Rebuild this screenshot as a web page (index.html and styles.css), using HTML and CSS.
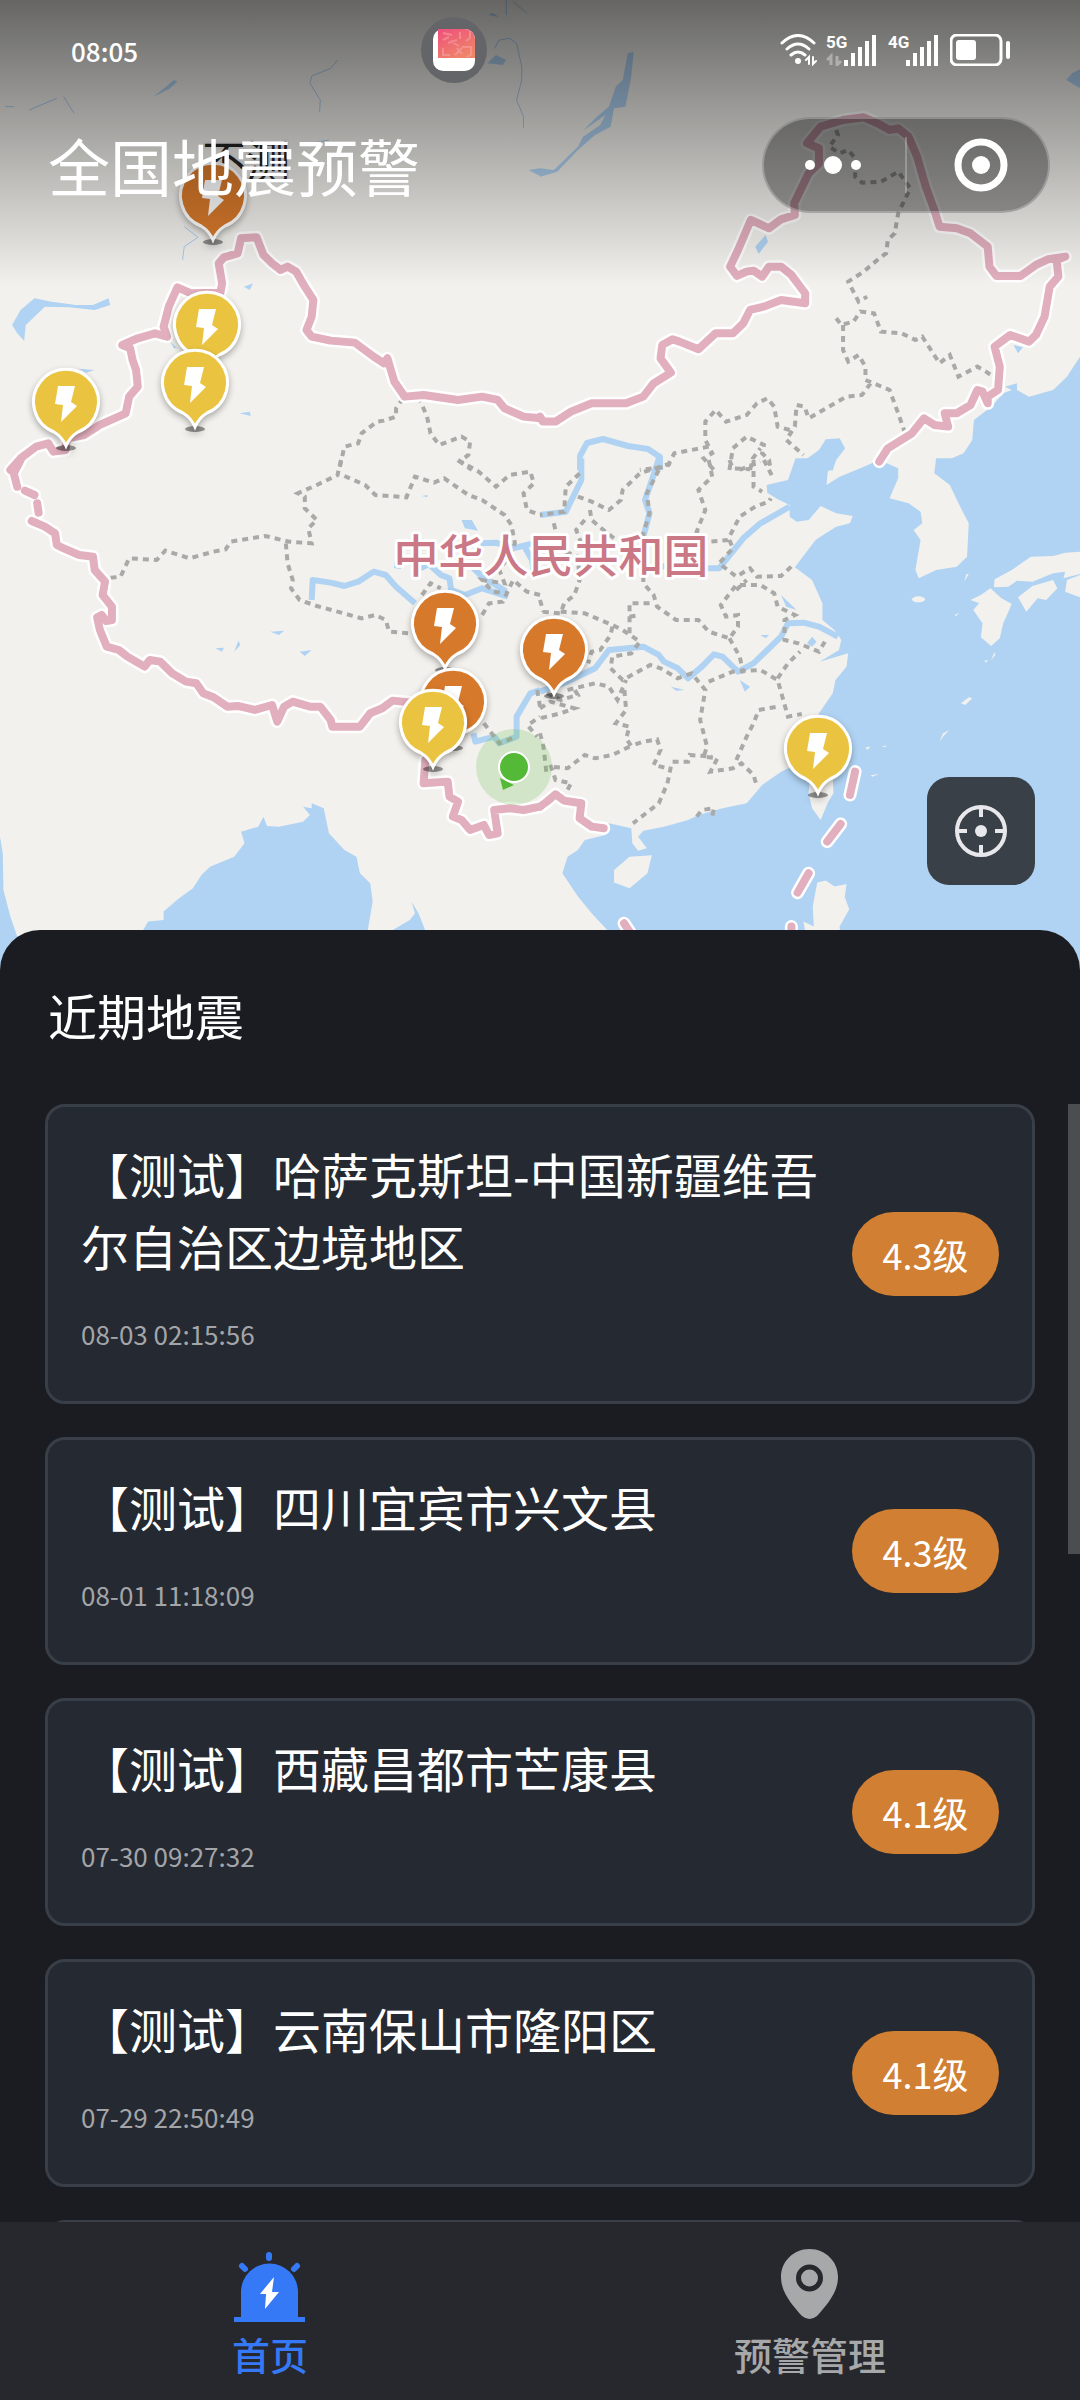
FILE: index.html
```html
<!DOCTYPE html>
<html lang="zh-CN">
<head>
    <meta charset="UTF-8">
    <meta name="viewport" content="width=device-width, initial-scale=1.0">
    <title>全国地震预警</title>
    <link rel="stylesheet" href="styles.css">
</head>
<body>
<div class="app">

    <!-- Map section -->
    <section class="map-area">
        <svg class="map" viewBox="0 0 1080 970" role="img" aria-label="地震分布地图">
            <defs>
                <!-- national border, drawn once per tile -->
                <g id="border">
                    <g transform="scale(.3444 .3333)">
                        <path d="M30 1410 60 1375 105 1340 140 1330 155 1355 190 1350 195 1315 245 1305 290 1275 365 1240 375 1190 400 1160 395 1110 385 1080 378 1045 355 1035 400 1015 450 1000 485 1010 475 980 490 920 515 862 555 880 640 878 645 850 635 790 650 772 690 760 700 715 745 712 765 765 790 790 815 810 835 800 860 815 885 860 910 900 905 950 890 990 905 1010 960 1022 1030 1028 1085 1070 1115 1090 1125 1075 1145 1145 1175 1190 1230 1185 1330 1200 1400 1190 1445 1200 1465 1225 1520 1250 1570 1255"/>
                    </g>
                    <g transform="translate(540 0) scale(.3444 .3333)">
                        <path d="M0 1250 8 1265 45 1265 90 1235 150 1210 250 1210 300 1190 330 1150 380 1118 350 1075 355 1035 385 1018 405 1025 460 1048 510 1000 560 1000 590 970 610 930 650 920 700 900 770 910 770 880 730 825 700 800 665 800 645 830 620 812 600 815 572 828 552 800 575 750 612 660 665 685 700 658 740 645 738 610 780 520 810 490 810 445 775 430 815 380 880 360 940 352 980 370 1015 390 1040 385 1070 410 1095 470 1120 560 1145 630 1160 680 1210 685 1250 700 1300 740 1305 800 1325 828 1395 828 1440 795 1475 778 1525 770 1500 780 1505 830 1480 860 1465 950 1440 1005 1420 1025 1365 1005 1320 1040 1335 1100 1330 1170 1300 1190 1300 1210 1285 1175 1270 1170 1250 1215 1210 1240 1175 1240 1185 1280 1145 1275 1115 1255 1080 1300 1010 1345 985 1385"/>
                    </g>
                    <g transform="translate(0 460) scale(.3444 .3333)">
                        <path d="M60 0 40 40 50 80M72 92 100 105M108 130 112 158M92 183 130 200 160 220 165 255 185 265 230 285 270 290 275 330 305 365 298 405 325 440 325 480 308 483 295 465 282 472 290 510 310 560 345 570 370 590 420 620 435 600 465 605 500 640 540 665 570 670 590 700 620 712 660 740 690 738 740 750 790 735 805 785 825 740 850 725 900 740 930 740 960 780 965 800 1045 800 1075 760 1110 745 1140 722 1200 728M1235 900 1230 970 1300 965 1305 1010 1330 1025 1315 1070 1340 1080 1365 1110 1405 1095 1420 1125 1445 1120 1435 1050 1480 1045 1520 1050 1568 1040"/>
                    </g>
                    <g transform="translate(540 460) scale(.3444 .3333)">
                        <path d="M0 1040 20 1025 45 1003 70 1022 120 1030 115 1075 150 1100 185 1105M915 935 900 1005M873 1092 834 1145M780 1240 748 1298M730 1400V1450M244 1390 285 1455"/>
                    </g>
                </g>
                <symbol id="pin" viewBox="-40 -40 80 96" overflow="visible">
                    <ellipse cx="0" cy="46" rx="10" ry="3" fill="#000" opacity=".4"/>
                    <path class="pin-body" d="M0 44C-3 37-7 33-12 30A32.500 32.500 0 1 1 12 30C7 33 3 37 0 44Z"/>
                    <path fill="#fff" d="M-8-16H9L5 0 11 4-5 20-3 3-11 2Z"/>
                </symbol>
            </defs>

            <rect width="1080" height="970" fill="#f2f1ed"/>

            <!-- sea and lakes -->
            <g fill="#b0d3f3">
                <g transform="scale(.3444 .3333)">
                    <path d="M35 975 60 930 100 895 150 905 220 915 270 915 315 895 320 915 275 930 200 922 130 920 100 950 75 975 70 1022 50 1000ZM445 290 480 262 505 240 515 245 490 268ZM708 860 735 850 725 870ZM495 1025 515 1045 505 1045ZM695 1240 725 1235 728 1248ZM228 1106 275 1110 250 1118ZM1535 510 1568 505V528ZM1418 45 1430 38 1450 52ZM1440 165 1470 180 1460 195 1415 190Z"/>
                </g>
                <g transform="translate(540 0) scale(.3444 .3333)">
                    <path d="M255 160 272 156 265 230 248 320 215 325 205 380 160 405 110 450 50 515 0 530V505L40 510 110 440 125 410 175 375 190 345 125 392 165 350 200 320 220 260 240 240ZM1528 240 1545 220 1568 208V265ZM625 740 655 705 662 725 635 762ZM1375 1035 1402 1042 1388 1060ZM1568 1070 1530 1130 1490 1170 1420 1190 1385 1170 1385 1150 1350 1160 1370 1170 1345 1180 1310 1220 1260 1260 1255 1320 1230 1360 1150 1395V1412H1568ZM742 1412 770 1380 810 1350 830 1318 870 1315 886 1345 860 1380 850 1412ZM930 1412 985 1388 1040 1412Z"/>
                </g>
                <g transform="translate(0 460) scale(.3444 .3333)">
                    <path d="M415 1412 430 1385 475 1380 475 1355 520 1315 560 1285 585 1245 610 1220 680 1190 710 1150 700 1115 750 1100 765 1070 775 1098 810 1100 880 1085 900 1065 880 1040 905 1045 905 1030 940 1045 955 1120 1000 1170 1035 1190 1045 1240 1075 1270 1082 1325 1068 1410 1060 1530H400ZM1138 1412 1190 1380 1205 1360 1195 1325 1215 1360 1235 1412ZM0 1130 8 1180 10 1290 30 1370 50 1430 80 1530H0ZM1340 180 1370 180 1388 212 1350 205ZM785 515 825 512 810 525ZM870 575 905 570 885 588ZM625 565 650 563 645 575ZM680 575 692 542 698 555ZM1225 108 1242 105 1240 112Z"/>
                </g>
                <g transform="translate(540 460) scale(.3444 .3333)">
                    <path d="M1568-5V1530H300L195 1410 150 1360 110 1310 65 1240 80 1190 110 1170 130 1140 190 1125 200 1090 265 1105 268 1150 285 1172 310 1165 285 1130 300 1112 360 1100 430 1080 460 1065 530 1045 600 1030 625 1000 645 975 700 935 740 915 780 850 810 760 850 700 858 660 890 620 895 580 812 605 868 570 875 540 855 510 820 480 820 430 790 360 740 322 800 240 830 220 860 200 900 190 908 168 860 160 815 138 780 180 745 185 725 170 725 135 690 118 660 98 658 75 720 60 742-5H850L835 40 832 75 870 50 930 25 985 0 1040 25 1040 55 1015 115 1070 130 1105 155 1110 190 1085 210 1105 240 1090 330 1100 355 1150 330 1210 320 1240 290 1245 190 1215 130 1190 75 1145 40 1150-5Z"/>
                    <path d="M640 525 665 525 655 535ZM775 550 790 530 803 545 790 560ZM580 660 610 680 595 695ZM380 680 420 690 395 692ZM700 405 745 450 715 440Z"/>
                </g>
            </g>

            <!-- islands -->
            <g fill="#f2f1ed" transform="translate(540 460) scale(.3444 .3333)">
                <path d="M1568 275 1525 278 1490 288 1425 290 1370 330 1320 358 1318 382 1360 380 1385 362 1430 365 1490 340 1525 335 1520 355 1568 342ZM1388 412 1430 378 1490 360 1502 385 1470 420 1445 415 1412 455ZM1568 345 1530 360 1525 395 1568 412ZM1250 420 1280 405 1308 385 1340 415 1370 432 1345 490 1335 535 1310 558 1280 532 1285 490 1258 450 1275 430ZM785 930 850 950 852 1000 835 1030 815 1080 790 1045 780 1000ZM215 1230 260 1190 325 1186 312 1240 260 1285 215 1268ZM805 1268 830 1262 855 1280 890 1272 885 1312 898 1348 870 1400 880 1530H790L765 1385 795 1400 792 1340Z"/>
                <ellipse cx="1099" cy="418" rx="19" ry="9"/>
                <path d="M1232 365 1238 342 1245 342ZM1222 730 1245 712 1255 715 1235 735ZM1160 845 1170 820 1188 810 1172 828ZM945 862 960 860 950 870ZM992 858 1008 857 1000 862ZM960 946 985 942 965 950ZM1310 600 1320 575 1322 585ZM1290 602 1302 600 1295 608ZM1203 465 1218 458 1208 468Z"/>
            </g>

            <!-- rivers -->
            <g class="river">
                <g transform="translate(0 460) scale(.3444 .3333)">
                    <path d="M905 420 908 360 960 368 1000 378 1040 365 1085 335 1120 345 1150 380 1205 430M1145 315 1165 318M1220 325 1245 312 1280 345 1305 355 1310 390 1350 405 1400 385 1475 410M1365 315 1400 350 1470 395M1395 250 1440 248 1490 265 1568 245M1520 255 1545 300 1550 345M1375 820 1380 845 1435 830 1450 850 1500 830 1500 770 1540 700 1568 690"/>
                </g>
                <g transform="translate(540 460) scale(.3444 .3333)">
                    <path d="M0 695 80 665 130 640 160 625 200 570 300 560 345 585 360 605 400 625 430 655 470 620 505 583 530 590 575 635 620 610 660 570 700 530 720 490 765 488 810 500 865 530M120-4 120 60 75 155 0 165M345-4 325 60 305 120 318 160 300 230 300 340 370 315M480 325 520 325 590 235 640 190 725 140"/>
                </g>
                <path d="M580 470V456L587 443 603 439 628 446 648 449 660 457V470"/>
            </g>
            <g class="stream">
                <g transform="scale(.3444 .3333)">
                    <path d="M928 335 930 300 900 250 905 228 960 205 980 180M1435 145 1450 120 1480 115 1500 130 1515 200 1515 240 1500 300 1520 350 1520 385M1470 0V45M1490 5 1530 40M530 780 535 740 575 712 535 680M15 320H40M85 330 165 295M185 290 215 340M905 430 955 420"/>
                </g>
            </g>

            <!-- province lines -->
            <g class="province">
                <g transform="scale(.3444 .3333)">
                    <path d="M1170 1195 1150 1225 1150 1250 1115 1262 1095 1265 1050 1300 1040 1330 1000 1340 985 1410M1215 1190 1240 1250 1250 1300 1275 1335 1340 1310 1365 1325 1360 1365 1335 1385 1370 1410"/>
                </g>
                <g transform="translate(540 0) scale(.3444 .3333)">
                    <path d="M860 390 865 405 840 440 870 460 895 450 915 475 915 530 935 548 990 545 1040 515 1075 565 1040 640 1030 700 1010 720 1005 760 985 775 940 815 895 845 925 905 950 890M860 955 875 975 910 965 930 935 970 940 990 995 1050 1000 1090 1020 1110 1010 1160 1090 1190 1065 1215 1130 1270 1100 1295 1115 1330 1140M880 975 880 1050 895 1085 925 1065 945 1100 945 1140 1015 1170 1040 1240 1060 1300M960 1150 935 1185 890 1190 780 1255 768 1220 745 1215 740 1280 715 1320 765 1365M725 1290 690 1280 680 1220 660 1195 630 1210 600 1245 540 1265 510 1230 480 1265 480 1320 500 1360 475 1375 505 1410M490 1340 390 1360 370 1400 290 1410M550 1410 560 1345 600 1310 650 1335 645 1360 665 1380 670 1410M610 1410 618 1375 640 1345M580 1410 640 1385"/>
                </g>
                <g transform="translate(0 460) scale(.3444 .3333)">
                    <path d="M990 0 980 45 920 75 865 100 885 110 885 145 920 180 895 205 905 250 840 245 770 228 670 245 655 268 620 275 550 295 480 272 455 300 375 295 350 350 310 355M830 250 835 310 850 360 845 385 870 420 920 438 980 455 1050 475 1090 465 1120 480 1130 515 1190 520M1000 48 1060 75 1090 105 1180 112 1205 50 1260 68 1290 55 1360 105 1400 120 1465 165 1485 195 1495 250 1480 285 1450 330 1465 370 1400 360 1430 395 1475 400M1330 0 1390 35 1440 80 1480 45 1540 35 1550 70 1520 100 1530 150 1568 165M1225 405 1250 370 1280 385M1400 465 1420 430 1460 425 1490 360 1530 395 1568 405M1405 790 1450 850 1500 830M1560 690 1568 740M1540 790 1568 770M1535 800 1560 830"/>
                </g>
                <g transform="translate(540 460) scale(.3444 .3333)">
                    <path d="M115 40 75 80 70 155 0 165M110 110 150 125 200 150 235 120 240 90 290 40 350 20 380 10M345 30 310 100 318 160 300 220 300 370 330 405 340 440 395 480 460 480 490 515 550 535 575 500 575 465 540 470 525 435 570 375 640 375 680 400 690 440 740 465 710 480 710 540 750 550 810 575 830 540M490 0 500 50 460 90 480 150 455 215 490 245 545 240 580 170 625 140 665 125 670 115M550 240 560 265 520 310 570 350 610 325 630 350 700 348 740 310M145 150 150 180 190 215 215 235 205 280M130 180 105 210 120 250M40 190 60 270 110 290 115 360 100 405 70 430 60 460 0 455M0 420 10 455M60 455 130 460 210 495 240 510 290 545 265 580 210 590 205 625 240 660 320 615 350 625 400 655 440 640 480 690 465 780 485 860 475 890 515 895 495 935 560 925 585 910 620 945 630 980M570 900 600 830 620 790 635 750 690 740M490 665 560 635 640 630 690 660 720 770 760 762M550 535 580 590 590 640M690 655 720 610 755 575M260 520 260 430 320 430M260 470 290 465M210 500 205 525 175 570 150 575 140 610M80 690 160 670 200 680 225 720 250 660M245 690 250 750 220 790 260 800 250 835 265 858 300 845 340 838 350 870 330 915 370 925M260 860 210 885 160 895 130 885 80 925 30 920M385 905 430 905 435 885 500 890M380 920 370 970 345 1030 270 1090M0 745 30 725 100 745 60 760 0 775M20 700 60 720 110 705 95 680M0 820 10 860 20 950M30 915 45 960 90 970 70 1010M570 390 600 360M620 0 620 80 645 95M650 0 675 50M550 0 560 25 610 28M455 1070 470 1050 505 1045 500 1070"/>
                </g>
            </g>

            <use href="#border" class="border-case"/>
            <use href="#border" class="border-line"/>

            <text class="country" x="551" y="573">中华人民共和国</text>
            <text class="place" x="246" y="178">不测</text>

            <!-- own position -->
            <circle cx="514" cy="767" r="38" fill="#5abb3c" opacity=".2"/>
            <path d="M500 778 503 790 514 785Z" fill="#55b938"/>
            <circle cx="514" cy="767" r="15" fill="#55b938" stroke="#fff" stroke-width="2"/>

            <!-- earthquake pins -->
            <g class="pins">
                <use href="#pin" class="orange" x="173" y="156" width="80" height="96"/>
                <use href="#pin" class="yellow" x="167" y="285" width="80" height="96"/>
                <use href="#pin" class="yellow" x="155" y="343" width="80" height="96"/>
                <use href="#pin" class="yellow" x="26" y="362" width="80" height="96"/>
                <use href="#pin" class="orange" x="405" y="584" width="80" height="96"/>
                <use href="#pin" class="orange" x="413" y="662" width="80" height="96"/>
                <use href="#pin" class="yellow" x="393" y="683" width="80" height="96"/>
                <use href="#pin" class="orange" x="514" y="610" width="80" height="96"/>
                <use href="#pin" class="yellow" x="778" y="709" width="80" height="96"/>
            </g>
        </svg>

        <div class="top">
            <div class="status">
                <span class="time">08:05</span>
                <span class="island">
                    <svg width="42" height="42" viewBox="0 0 42 42">
                        <defs>
                            <linearGradient id="pink" x1="0" y1="0" x2=".6" y2="1">
                                <stop offset="0" stop-color="#ee4f7d"/>
                                <stop offset="1" stop-color="#ef8468"/>
                            </linearGradient>
                        </defs>
                        <rect width="42" height="42" rx="10" fill="#fff"/>
                        <path d="M5 0H32A10 10 0 0 1 42 10V29H5Z" fill="url(#pink)"/>
                        <path d="M10 4 19 6M10 11 16 8M15 14 24 11M27 3V10M37 2V9L33 12M17 12 26 17M10 19V26H17M22 26 31 17M24 19 29 25M31 18H38V26L34 28" fill="none" stroke="#f5a0a0" stroke-width="2" opacity=".6"/>
                    </svg>
                </span>
                <span class="signals">
                    <svg width="37" height="32" viewBox="0 0 37 32" fill="none" stroke="#fff" stroke-width="3" stroke-linecap="round">
                        <path d="M2 9Q18-6 34 9M7 15Q18 5 29 15M11 21Q18 15 25 21"/>
                        <circle cx="18" cy="27" r="3" fill="#fff" stroke="none"/>
                        <path d="M29 30V23L26 26M33 23V30L36 27" stroke-width="2"/>
                    </svg>
                    <svg width="53" height="32" viewBox="0 0 53 32" fill="#fff">
                        <text class="net" x="0" y="14">5G</text>
                        <path d="M5 31V22L1 26M11 22V31L15 27" fill="none" stroke="#fff" stroke-width="3" opacity=".35"/>
                        <path d="M18 26H22V32H18ZM25 19H29V32H25ZM32 13H36V32H32ZM39 7H43V32H39ZM46 1H50V32H46Z"/>
                    </svg>
                    <svg width="53" height="32" viewBox="0 0 53 32" fill="#fff">
                        <text class="net" x="0" y="14">4G</text>
                        <path d="M18 26H22V32H18ZM25 19H29V32H25ZM32 13H36V32H32ZM39 7H43V32H39ZM46 1H50V32H46Z"/>
                    </svg>
                    <svg width="60" height="32" viewBox="0 0 60 32" fill="#fff">
                        <rect x="1" y="1" width="50" height="30" rx="6" fill="none" stroke="#fff" stroke-width="3"/>
                        <rect x="6" y="6" width="20" height="20" rx="3"/>
                        <rect x="56" y="7" width="4" height="18" rx="2"/>
                    </svg>
                </span>
            </div>
            <div class="titlebar">
                <h1>全国地震预警</h1>
                <div class="capsule">
                    <button type="button" aria-label="更多">
                        <svg width="56" height="56" viewBox="0 0 56 56" fill="#fff">
                            <circle cx="3" cy="28" r="5"/>
                            <circle cx="26" cy="28" r="9"/>
                            <circle cx="49" cy="28" r="5"/>
                        </svg>
                    </button>
                    <button type="button" aria-label="关闭">
                        <svg width="56" height="56" viewBox="0 0 56 56">
                            <circle cx="31" cy="28" r="23" fill="none" stroke="#fff" stroke-width="7"/>
                            <circle cx="31" cy="28" r="9" fill="#fff"/>
                        </svg>
                    </button>
                </div>
            </div>
        </div>

        <button class="locate" type="button" aria-label="定位">
            <svg width="52" height="52" viewBox="0 0 52 52" fill="none" stroke="#e8e8ec" stroke-width="4">
                <circle cx="26" cy="26" r="24"/>
                <path d="M26 2V12M26 40V50M2 26H12M40 26H50"/>
                <circle cx="26" cy="26" r="6" fill="#e8e8ec" stroke="none"/>
            </svg>
        </button>
    </section>

    <!-- Recent earthquakes -->
    <main class="sheet">
        <h2>近期地震</h2>
        <div class="list-wrap">
            <ul class="list">
                <li class="card">
                    <div class="info">
                        <h3>【测试】哈萨克斯坦-中国新疆维吾尔自治区边境地区</h3>
                        <time>08-03 02:15:56</time>
                    </div>
                    <span class="level">4.3级</span>
                </li>
                <li class="card">
                    <div class="info">
                        <h3>【测试】四川宜宾市兴文县</h3>
                        <time>08-01 11:18:09</time>
                    </div>
                    <span class="level">4.3级</span>
                </li>
                <li class="card">
                    <div class="info">
                        <h3>【测试】西藏昌都市芒康县</h3>
                        <time>07-30 09:27:32</time>
                    </div>
                    <span class="level">4.1级</span>
                </li>
                <li class="card">
                    <div class="info">
                        <h3>【测试】云南保山市隆阳区</h3>
                        <time>07-29 22:50:49</time>
                    </div>
                    <span class="level">4.1级</span>
                </li>
                <li class="card"></li>
            </ul>
            <div class="scroll-thumb"></div>
        </div>
    </main>

    <!-- Tab bar -->
    <nav class="tabbar">
        <a class="tab active" href="#home">
            <svg width="72" height="76" viewBox="0 0 72 76">
                <path fill="#3579f6" d="M7 69V44A28.500 28.500 0 0 1 64 44V69H71V74H0V69Z"/>
                <path d="M35 7V10M8 18 11 21M63 18 60 21" stroke="#3579f6" stroke-width="6" stroke-linecap="round"/>
                <path fill="#fff" d="M40 29 26 46H32L31 61 45 44H38Z"/>
            </svg>
            <span>首页</span>
        </a>
        <a class="tab" href="#manage">
            <svg width="72" height="76" viewBox="0 0 72 76">
                <path fill="#a7a8aa" d="M35.500 1C19 1 7 14 7 29 7 45 19 58 28 68Q35.500 74 43 68C52 58 64 45 64 29 64 14 52 1 35.500 1Z"/>
                <circle cx="35.500" cy="30" r="11" fill="none" stroke="#27282e" stroke-width="5"/>
            </svg>
            <span>预警管理</span>
        </a>
    </nav>
</div>
</body>
</html>
```
FILE: styles.css
```css
* {
    box-sizing: border-box;
}
body {
    margin: 0;
    font-family: "Noto Sans CJK SC", "Noto Sans", sans-serif;
    font-weight: 400;
    color: #fff;
    background-color: #1b1c21;
}
h1, h2, h3, ul {
    margin: 0;
    padding: 0;
    font-weight: 400;
}
button {
    border: 0;
    padding: 0;
    background: none;
    cursor: pointer;
}
svg {
    display: block;
    flex: none;
}
.app {
    display: flex;
    flex-direction: column;
    height: 100vh;
    overflow: hidden;
}

/* Map */
.map-area {
    position: relative;
    flex: none;
}
.map {
    width: 100%;
    height: auto;
}
.map path {
    vector-effect: non-scaling-stroke;
}
.river {
    fill: none;
    stroke: #b0d3f3;
    stroke-width: 6px;
    stroke-linejoin: round;
}
.stream {
    fill: none;
    stroke: #a9cdf0;
    stroke-width: 1px;
}
.province {
    fill: none;
    stroke: #a9a9a7;
    stroke-width: 4px;
    stroke-dasharray: 6 5;
}
.border-case,
.border-line {
    fill: none;
    stroke-linecap: round;
    stroke-linejoin: round;
}
.border-case {
    stroke: #fff;
    stroke-width: 13px;
}
.border-line {
    stroke: #e2afbf;
    stroke-width: 8px;
}
.country,
.place {
    text-anchor: middle;
    paint-order: stroke;
    stroke-linejoin: round;
}
.country {
    font-size: 45px;
    font-weight: 500;
    fill: #cb7886;
    stroke: #fff;
    stroke-width: 6px;
}
.place {
    font-size: 44px;
    font-weight: 400;
    fill: #222;
    stroke: #e8e8e8;
    stroke-width: 4px;
}
.pins use {
    filter: drop-shadow(0 3px 3px rgba(0, 0, 0, 0.3));
}
.pin-body {
    stroke: #fff;
    stroke-width: 3px;
}
.orange {
    fill: #d7792b;
}
.yellow {
    fill: #eac441;
}

/* Dark fade with status bar and title over the map */
.top {
    position: absolute;
    top: 0;
    left: 0;
    right: 0;
    height: 286px;
    background: linear-gradient(rgba(0, 0, 0, 0.58), rgba(0, 0, 0, 0));
}
.status {
    display: grid;
    grid-template-columns: 350px auto 1fr;
    align-items: center;
    height: 100px;
    padding: 0 70px 0 71px;
}
.time {
    font-size: 26px;
    font-weight: 500;
}
.island {
    display: flex;
    align-items: center;
    justify-content: center;
    width: 66px;
    height: 66px;
    border-radius: 50%;
    background-color: #646569;
}
.signals {
    display: flex;
    justify-content: flex-end;
    gap: 9px;
}
.net {
    font-family: Roboto, "Liberation Sans", sans-serif;
    font-size: 17px;
    font-weight: 700;
}
.titlebar {
    display: flex;
    align-items: center;
    justify-content: space-between;
    margin-top: 17px;
    padding: 0 30px 0 48px;
}
h1 {
    font-size: 62px;
    line-height: 90px;
}
.capsule {
    display: flex;
    align-items: center;
    width: 288px;
    height: 96px;
    border: 2px solid rgba(255, 255, 255, 0.25);
    border-radius: 48px;
    background-color: rgba(0, 0, 0, 0.35);
}
.capsule button {
    flex: 1;
    display: flex;
    justify-content: center;
    height: 56px;
}
.capsule svg {
    overflow: visible;
}
.capsule button + button {
    border-left: 2px solid rgba(255, 255, 255, 0.25);
}
.locate {
    position: absolute;
    right: 45px;
    bottom: 85px;
    display: flex;
    align-items: center;
    justify-content: center;
    width: 108px;
    height: 108px;
    border-radius: 22px;
    background-color: #3a4047;
}

/* Recent earthquakes */
.sheet {
    position: relative;
    flex: 1;
    display: flex;
    flex-direction: column;
    min-height: 0;
    margin-top: -40px;
    border-radius: 40px 40px 0 0;
    background-color: #1b1c21;
}
h2 {
    padding: 49px 48px 53px;
    font-size: 49px;
    line-height: 72px;
}
.list-wrap {
    position: relative;
    flex: 1;
    min-height: 0;
}
.list {
    display: flex;
    flex-direction: column;
    gap: 33px;
    height: 100%;
    padding: 0 45px;
    overflow: hidden;
    list-style: none;
}
.scroll-thumb {
    position: absolute;
    top: 0;
    right: 0;
    width: 12px;
    height: 450px;
    background-color: #4c4d51;
}
.card {
    display: flex;
    align-items: center;
    gap: 12px;
    flex: none;
    min-height: 228px;
    padding: 30px 33px 49px;
    border: 3px solid #393f48;
    border-radius: 20px;
    background-color: #252931;
}
.info {
    flex: 1;
    align-self: flex-start;
}
h3 {
    font-size: 48px;
    line-height: 72px;
}
time {
    display: block;
    margin-top: 35px;
    font-size: 26px;
    line-height: 36px;
    color: #a3a5a9;
}
.level {
    min-width: 147px;
    margin-top: 19px;
    border-radius: 42px;
    font-size: 36px;
    line-height: 84px;
    text-align: center;
    background-color: #d17f32;
}

/* Tab bar */
.tabbar {
    position: relative;
    display: flex;
    flex: none;
    height: 178px;
    padding-top: 26px;
    background-color: #27282e;
}
.tab {
    flex: 1;
    display: flex;
    flex-direction: column;
    align-items: center;
    gap: 6px;
    font-size: 38px;
    font-weight: 500;
    line-height: 48px;
    color: #a7a8aa;
    text-decoration: none;
}
.tab.active {
    color: #3579f6;
}
```
